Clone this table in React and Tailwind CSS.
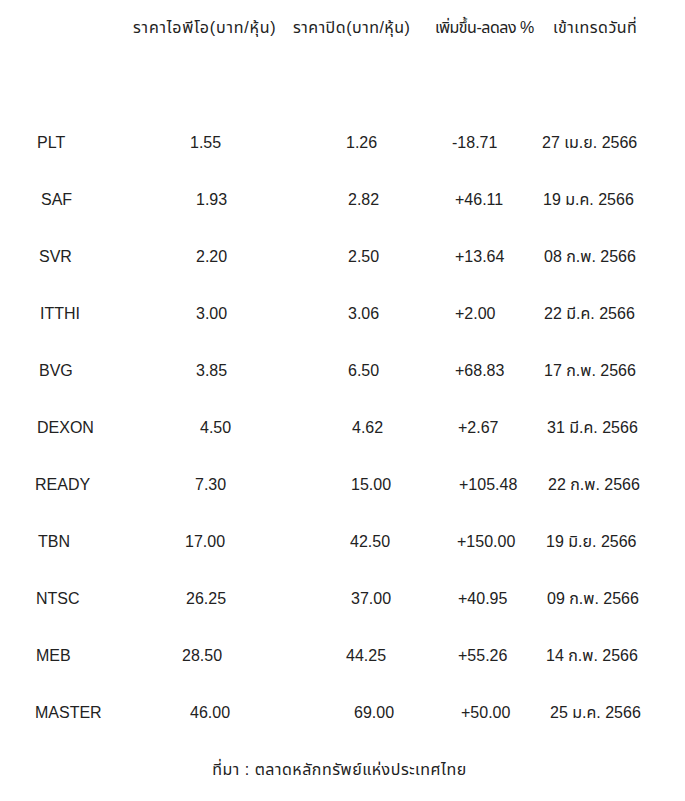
import React from 'react';

const rows = [
  { sym: 'PLT', ipo: '1.55', close: '1.26', chg: '-18.71', date: '27 เม.ย. 2566', p: ['pl-[37px]', 'pl-[40px]', 'pl-[46px]', 'pl-[22px]', 'pl-[12px]'] },
  { sym: 'SAF', ipo: '1.93', close: '2.82', chg: '+46.11', date: '19 ม.ค. 2566', p: ['pl-[41px]', 'pl-[46px]', 'pl-[48px]', 'pl-[25px]', 'pl-[13px]'] },
  { sym: 'SVR', ipo: '2.20', close: '2.50', chg: '+13.64', date: '08 ก.พ. 2566', p: ['pl-[39px]', 'pl-[46px]', 'pl-[48px]', 'pl-[25px]', 'pl-[14px]'] },
  { sym: 'ITTHI', ipo: '3.00', close: '3.06', chg: '+2.00', date: '22 มี.ค. 2566', p: ['pl-[40px]', 'pl-[46px]', 'pl-[48px]', 'pl-[25px]', 'pl-[14px]'] },
  { sym: 'BVG', ipo: '3.85', close: '6.50', chg: '+68.83', date: '17 ก.พ. 2566', p: ['pl-[39px]', 'pl-[46px]', 'pl-[48px]', 'pl-[25px]', 'pl-[14px]'] },
  { sym: 'DEXON', ipo: '4.50', close: '4.62', chg: '+2.67', date: '31 มี.ค. 2566', p: ['pl-[37px]', 'pl-[50px]', 'pl-[52px]', 'pl-[28px]', 'pl-[17px]'] },
  { sym: 'READY', ipo: '7.30', close: '15.00', chg: '+105.48', date: '22 ก.พ. 2566', p: ['pl-[35px]', 'pl-[45px]', 'pl-[51px]', 'pl-[29px]', 'pl-[18px]'] },
  { sym: 'TBN', ipo: '17.00', close: '42.50', chg: '+150.00', date: '19 มิ.ย. 2566', p: ['pl-[38px]', 'pl-[35px]', 'pl-[50px]', 'pl-[27px]', 'pl-[16px]'] },
  { sym: 'NTSC', ipo: '26.25', close: '37.00', chg: '+40.95', date: '09 ก.พ. 2566', p: ['pl-[36px]', 'pl-[36px]', 'pl-[51px]', 'pl-[28px]', 'pl-[17px]'] },
  { sym: 'MEB', ipo: '28.50', close: '44.25', chg: '+55.26', date: '14 ก.พ. 2566', p: ['pl-[36px]', 'pl-[32px]', 'pl-[46px]', 'pl-[28px]', 'pl-[16px]'] },
  { sym: 'MASTER', ipo: '46.00', close: '69.00', chg: '+50.00', date: '25 ม.ค. 2566', p: ['pl-[35px]', 'pl-[40px]', 'pl-[54px]', 'pl-[31px]', 'pl-[20px]'] },
];

const widths = ['w-[150px]', 'w-[150px]', 'w-[130px]', 'w-[100px]', 'flex-1'];

export default function App() {
  return (
    <div className="w-[685px] h-[801px] bg-white text-[#222] text-[16px] font-['Liberation_Sans','Noto_Sans_Thai','Noto_Sans',sans-serif] overflow-hidden">
      <div className="pt-[19px] flex leading-[18px] h-[37px] whitespace-nowrap">
        <div className="w-[133px]" />
        <div className="w-[160px] tracking-[0.8px]">ราคาไอพีโอ(บาท/หุ้น)</div>
        <div className="w-[142px] tracking-[0.5px]">ราคาปิด(บาท/หุ้น)</div>
        <div className="w-[118px] tracking-[-0.5px]">เพิ่มขึ้น-ลดลง %</div>
        <div className="flex-1 tracking-[0.5px]">เข้าเทรดวันที่</div>
      </div>

      <div className="mt-[77px]">
        {rows.map((r) => {
          const cells = [r.sym, r.ipo, r.close, r.chg, r.date];
          return (
            <div key={r.sym} className="flex h-[57px] items-center leading-[18px] whitespace-nowrap">
              {cells.map((c, i) => (
                <div key={i} className={`${widths[i]} ${r.p[i]}`}>{c}</div>
              ))}
            </div>
          );
        })}
      </div>

      <div className="mt-[20px] text-center leading-[18px] pr-[6px] tracking-[0.5px]">ที่มา : ตลาดหลักทรัพย์แห่งประเทศไทย</div>
    </div>
  );
}
